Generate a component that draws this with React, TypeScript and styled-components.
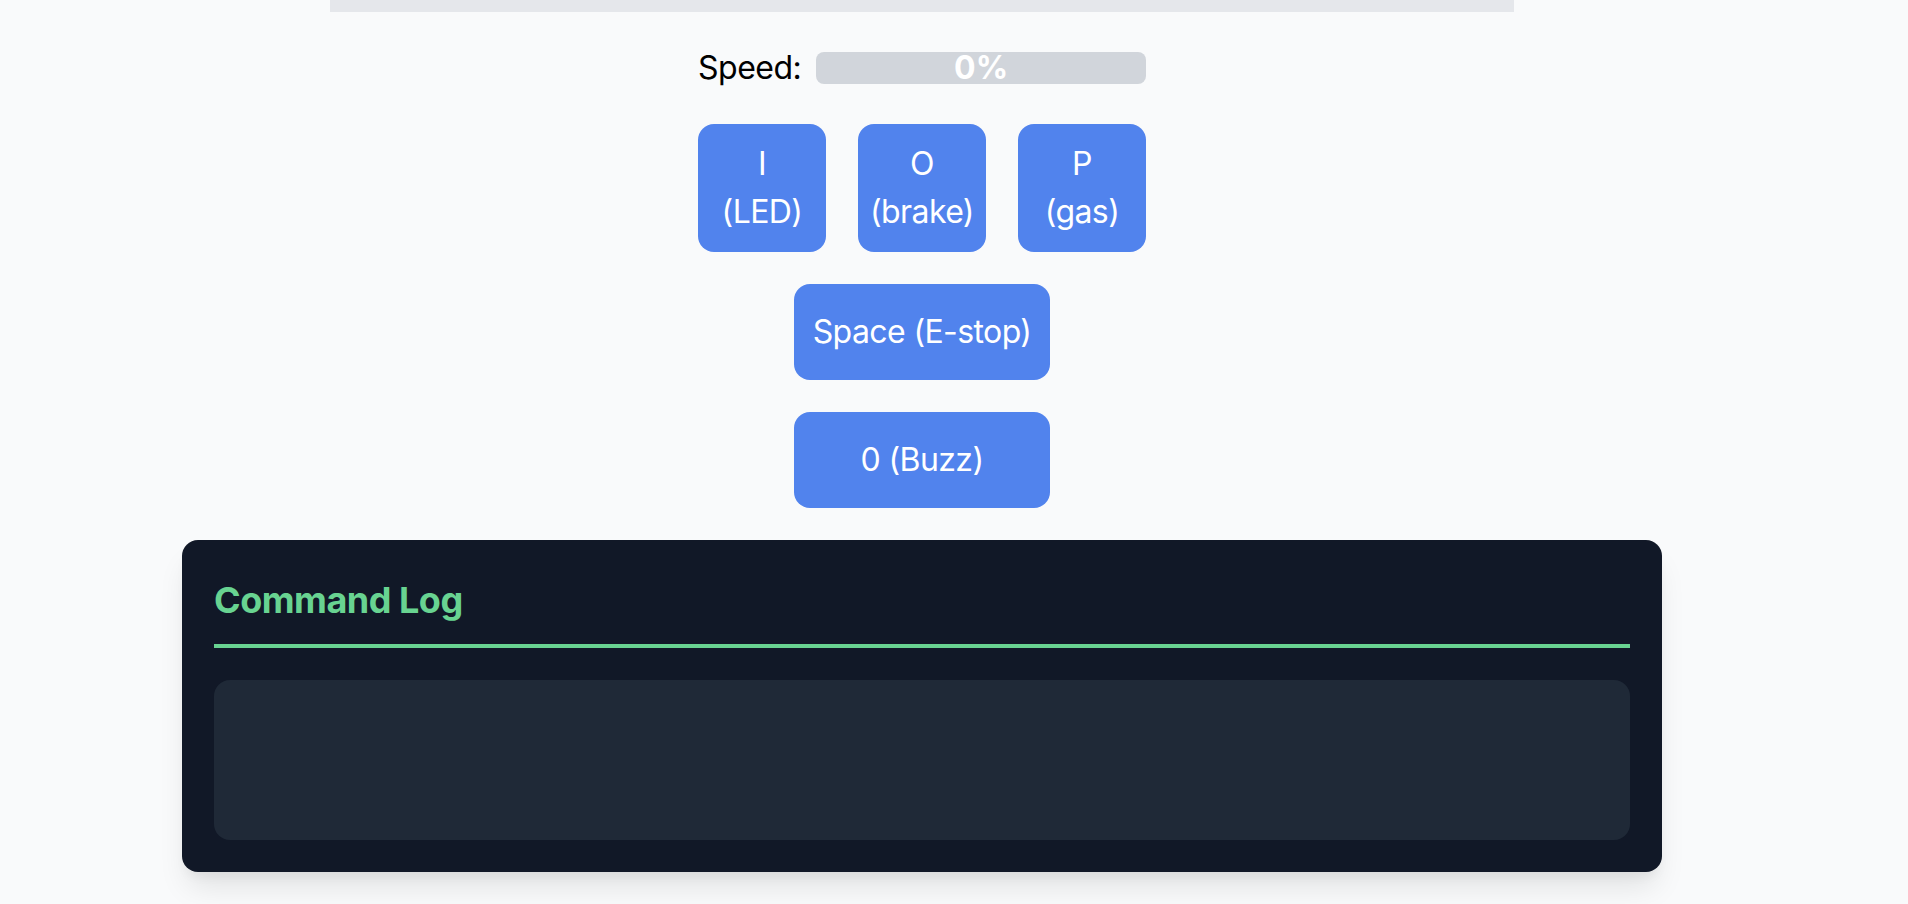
import * as React from 'react';
import styled, { createGlobalStyle } from 'styled-components';

const GlobalStyle = createGlobalStyle`
  html, body {
    margin: 0;
    padding: 0;
    background: #f9fafb;
  }
  body {
    font-family: Inter, "Noto Sans", "Liberation Sans", sans-serif;
    font-size: 32px;
    line-height: 1.5;
    color: #000000;
  }
  * {
    box-sizing: border-box;
  }
`;

const Page = styled.div`
  align-items: center;
  display: flex;
  flex-direction: column;
  gap: 32px;
  min-height: 904px;
  width: 1844px;
`;

const TopStrip = styled.div`
  background: #e5e7eb;
  height: 12px;
  width: 1184px;
`;

const SpeedRow = styled.div`
  align-items: center;
  display: flex;
  flex-direction: row;
  gap: 15px;
  width: 448px;
`;

const SpeedLabel = styled.span`
  letter-spacing: -0.5px;
  white-space: nowrap;
`;

const SpeedTrack = styled.div`
  background: #d1d5db;
  border-radius: 8px;
  flex: 1;
  height: 32px;
  position: relative;
`;

const SpeedFill = styled.div`
  background: #22c55e;
  border-radius: 8px;
  height: 100%;
`;

const SpeedValue = styled.span`
  color: #ffffff;
  font-weight: 700;
  left: 0;
  line-height: 32px;
  position: absolute;
  right: 0;
  text-align: center;
  top: 0;
`;

const KeyRow = styled.div`
  display: flex;
  flex-direction: row;
  gap: 32px;
  justify-content: center;
`;

const KeyButton = styled.button<{ $wide?: boolean }>`
  align-items: center;
  background: #5183ed;
  border: none;
  border-radius: 16px;
  color: #ffffff;
  cursor: pointer;
  display: flex;
  flex-direction: column;
  font-family: inherit;
  font-size: 32px;
  height: ${(p) => (p.$wide ? '96px' : '128px')};
  justify-content: center;
  letter-spacing: -0.6px;
  line-height: 48px;
  padding: 0;
  width: ${(p) => (p.$wide ? '256px' : '128px')};
`;

const LogPanel = styled.section`
  align-self: stretch;
  background: #111827;
  border-radius: 16px;
  box-shadow: 0 20px 30px -6px rgba(0, 0, 0, 0.1), 0 8px 12px -4px rgba(0, 0, 0, 0.05);
  margin: 0 182px 32px 182px;
  padding: 32px;
`;

const LogTitle = styled.h2`
  border-bottom: 4px solid #68d391;
  color: #68d391;
  font-size: 36px;
  font-weight: 700;
  letter-spacing: -0.5px;
  line-height: 56px;
  margin: 0 0 32px 0;
  padding-bottom: 16px;
`;

const LogBody = styled.div`
  background: #1f2937;
  border-radius: 16px;
  height: 160px;
  overflow-y: auto;
`;

const keys = [
  { key: 'I', label: '(LED)' },
  { key: 'O', label: '(brake)' },
  { key: 'P', label: '(gas)' },
];

export default function App() {
  const speed = 0;

  return (
    <>
      <GlobalStyle />
      <Page>
        <TopStrip />

        <SpeedRow>
          <SpeedLabel>Speed:</SpeedLabel>
          <SpeedTrack>
            <SpeedFill style={{ width: `${speed}%` }} />
            <SpeedValue>{speed}%</SpeedValue>
          </SpeedTrack>
        </SpeedRow>

        <KeyRow>
          {keys.map((k) => (
            <KeyButton key={k.key}>
              <span>{k.key}</span>
              <span>{k.label}</span>
            </KeyButton>
          ))}
        </KeyRow>

        <KeyRow>
          <KeyButton $wide>Space (E-stop)</KeyButton>
        </KeyRow>

        <KeyRow>
          <KeyButton $wide>0 (Buzz)</KeyButton>
        </KeyRow>

        <LogPanel>
          <LogTitle>Command Log</LogTitle>
          <LogBody />
        </LogPanel>
      </Page>
    </>
  );
}
